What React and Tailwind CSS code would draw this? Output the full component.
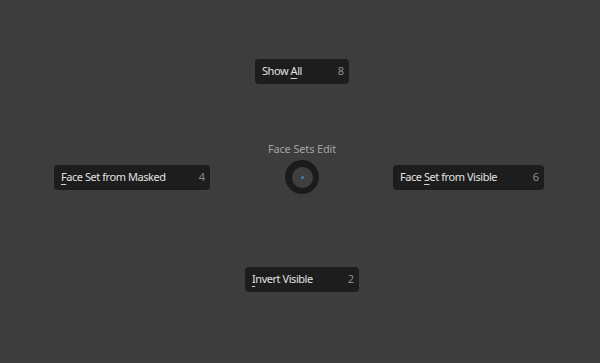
const font = { fontFamily: '"Noto Sans", "DejaVu Sans", sans-serif' };

function PieItem({ before, hot, after, num, width }) {
    return (
        <div className={`flex items-center justify-between h-[25px] rounded-[4px] bg-[#1d1d1d] pl-[7px] pr-[5px] text-[11px] ${width}`}>
            <span className="text-[#e2e2e2] whitespace-nowrap tracking-[-0.45px]">
                {before}
                <span className="underline underline-offset-[3px] decoration-[#cfcfcf]">{hot}</span>
                {after}
            </span>
            <span className="text-[#8d8d8d]">{num}</span>
        </div>
    );
}

export default function App() {
    return (
        <div className="w-[600px] h-[363px] bg-[#3d3d3d] overflow-hidden flex flex-col pt-[59px]" style={font}>
            <div className="flex pl-[255px]">
                <PieItem before="Show " hot="A" after="ll" num="8" width="w-[94px]" />
            </div>

            <div className="flex justify-center pl-[4px] mt-[57px] h-[16px] items-center text-[11px] text-[#a3a3a3] tracking-[-0.15px]">
                Face Sets Edit
            </div>

            <div className="flex items-center pl-[54px] mt-[3px] h-[34px]">
                <PieItem before="" hot="F" after="ace Set from Masked" num="4" width="w-[156px]" />
                <div className="ml-[75px] w-[34px] h-[34px] rounded-full bg-[#1b1b1b] flex items-center justify-center">
                    <div className="w-[21px] h-[21px] rounded-full bg-[#3f3f3f] flex items-center justify-center">
                        <div className="w-[3px] h-[3px] rounded-full bg-[#4a7ac4]" />
                    </div>
                </div>
                <div className="ml-[74px]">
                    <PieItem before="Face " hot="S" after="et from Visible" num="6" width="w-[151px]" />
                </div>
            </div>

            <div className="flex pl-[245px] mt-[73px]">
                <PieItem before="" hot="I" after="nvert Visible" num="2" width="w-[114px]" />
            </div>
        </div>
    );
}
